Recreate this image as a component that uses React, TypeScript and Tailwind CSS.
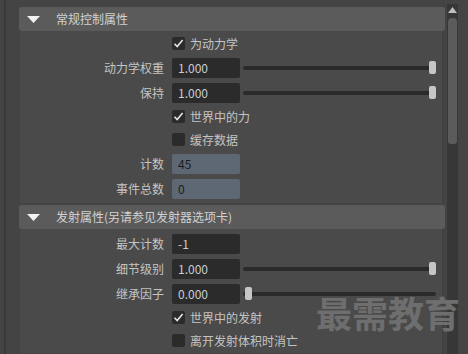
import React from "react";

const font = { fontFamily: '"Noto Sans CJK SC", "Noto Sans", sans-serif' };

type Row =
  | { kind: "check"; label: string; checked: boolean }
  | { kind: "field"; label: string; value: string; slider?: number; locked?: boolean };

const general: Row[] = [
  { kind: "check", label: "为动力学", checked: true },
  { kind: "field", label: "动力学权重", value: "1.000", slider: 1 },
  { kind: "field", label: "保持", value: "1.000", slider: 1 },
  { kind: "check", label: "世界中的力", checked: true },
  { kind: "check", label: "缓存数据", checked: false },
  { kind: "field", label: "计数", value: "45", locked: true },
  { kind: "field", label: "事件总数", value: "0", locked: true },
];

const emission: Row[] = [
  { kind: "field", label: "最大计数", value: "-1" },
  { kind: "field", label: "细节级别", value: "1.000", slider: 1 },
  { kind: "field", label: "继承因子", value: "0.000", slider: 0 },
  { kind: "check", label: "世界中的发射", checked: true },
  { kind: "check", label: "离开发射体积时消亡", checked: false },
];

const Check = ({ on }: { on: boolean }) => (
  <div className="w-[13px] h-[13px] rounded-[2px] bg-[#2b2b2b] flex items-center justify-center">
    {on && (
      <svg width="11" height="11" viewBox="0 0 11 11">
        <path d="M1.5 5.8 L4.2 8.6 L9.6 2" fill="none" stroke="#e6e6e6" strokeWidth="1.6" />
      </svg>
    )}
  </div>
);

const Slider = ({ value }: { value: number }) => (
  <div className="flex-1 ml-[3px] mr-[6px] relative h-[13px] flex items-center">
    <div className="w-full h-[4px] rounded-full bg-[#2a2a2a]" />
    <div
      className="absolute top-0 w-[7px] h-[13px] rounded-[2px] bg-[#c6c6c6]"
      style={{ left: `calc(${value * 100}% - ${value * 7}px + ${value ? 0 : 2}px)` }}
    />
  </div>
);

const RowView = ({ row }: { row: Row }) => {
  if (row.kind === "check") {
    return (
      <div className="h-[23px] flex items-center pl-[152px] gap-[5px]">
        <Check on={row.checked} />
        <span className="text-[12px] text-[#c4c4c4]">{row.label}</span>
      </div>
    );
  }
  return (
    <div className="h-[25px] flex items-center">
      <div className="w-[144px] text-right text-[12px] text-[#c4c4c4]">{row.label}</div>
      <div
        className={`ml-[8px] w-[68px] h-[20px] rounded-[2px] flex items-center pl-[6px] text-[12px] ${
          row.locked ? "bg-[#5d6874] text-[#1c1c1c]" : "bg-[#2b2b2b] text-[#c8cdd4]"
        }`}
      >
        {row.value}
      </div>
      {row.slider !== undefined && <Slider value={row.slider} />}
    </div>
  );
};

const Section = ({ title, rows, first }: { title: string; rows: Row[]; first?: boolean }) => (
  <div className="flex flex-col">
    <div className="h-[24px] rounded-[3px] bg-[#5b5b5b] flex items-center pl-[8px]">
      <svg width="13" height="7" viewBox="0 0 13 7">
        <path d="M0 0 H13 L6.5 7 Z" fill="#f2f2f2" />
      </svg>
      <span className="ml-[16px] text-[12px] text-[#d2d2d2]">{title}</span>
    </div>
    <div className={`ml-[1px] mr-[1px] bg-[#4a4a4a] border-r-2 border-[#414141] ${first ? "pt-[1px] pb-[2px]" : "pt-[2px] pb-[1px]"}`}>
      {rows.map((r, i) => (
        <RowView key={i} row={r} />
      ))}
    </div>
  </div>
);

export default function App() {
  return (
    <div className="w-[468px] h-[354px] bg-[#444444] flex overflow-hidden relative" style={font}>
      <div className="w-[19px] flex shrink-0">
        <div className="ml-[4px] w-[2px] h-full bg-[#3a3a3a]" />
      </div>
      <div className="w-[426px] shrink-0 pt-[7px] flex flex-col gap-[2px]">
        <Section title="常规控制属性" rows={general} first />
        <Section title="发射属性(另请参见发射器选项卡)" rows={emission} />
      </div>
      <div className="w-[2px] shrink-0" />
      <div className="w-[11px] shrink-0 mt-[4px] bg-[#373737] flex flex-col items-center">
        <svg width="9" height="6" viewBox="0 0 9 6" className="mt-[3px]">
          <path d="M0 6 L4.5 0 L9 6 Z" fill="#bdbdbd" />
        </svg>
        <div className="mt-[5px] w-[9px] h-[126px] rounded-t-[4px] rounded-b-[3px] bg-[#5b5b5b]" />
      </div>
      <div className="flex-1" />
      <div className="absolute left-[316px] top-[294px] text-[36px] font-bold leading-none text-[#6e6e6e] pointer-events-none">
        最需教育
      </div>
    </div>
  );
}
